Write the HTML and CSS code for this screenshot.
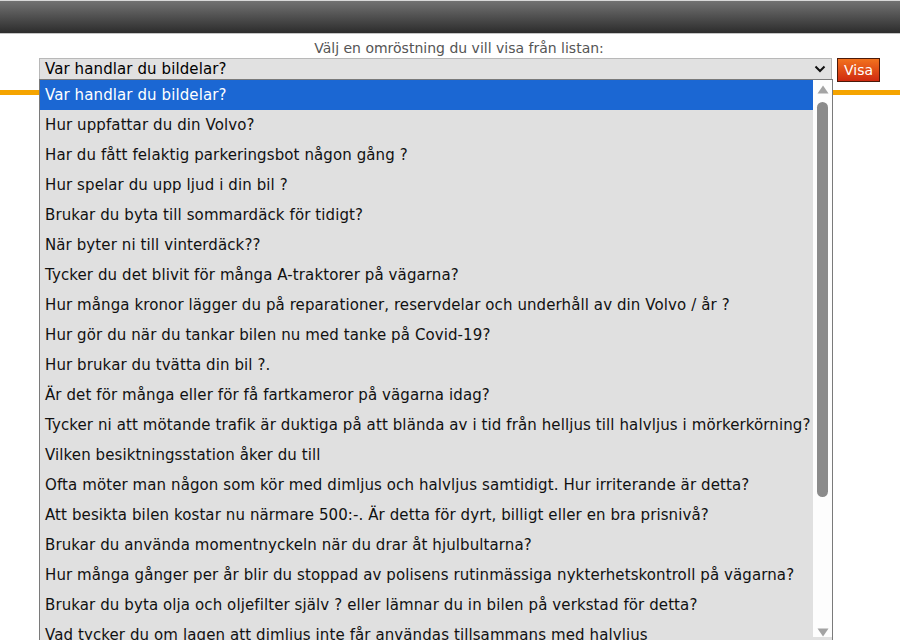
FILE: index.html
```html
<!DOCTYPE html>
<html lang="sv">
<head>
<meta charset="utf-8">
<title>Omröstning</title>
<link rel="stylesheet" href="styles.css">
</head>
<body>
<div class="topbar"></div>
<div class="content">
  <div class="label">Välj en omröstning du vill visa från listan:</div>
  <div class="row">
    <div class="select">
      <span>Var handlar du bildelar?</span>
      <svg class="chev" width="12" height="8" viewBox="0 0 12 8"><path d="M1.5 1.5 L6 6 L10.5 1.5" fill="none" stroke="#111" stroke-width="2"/></svg>
    </div>
    <button class="visa">Visa</button>
  </div>
  <div class="orange"></div>
</div>
<div class="dropdown">
  <ul class="options">
    <li class="sel">Var handlar du bildelar?</li>
    <li>Hur uppfattar du din Volvo?</li>
    <li>Har du fått felaktig parkeringsbot någon gång ?</li>
    <li>Hur spelar du upp ljud i din bil ?</li>
    <li>Brukar du byta till sommardäck för tidigt?</li>
    <li>När byter ni till vinterdäck??</li>
    <li>Tycker du det blivit för många A-traktorer på vägarna?</li>
    <li>Hur många kronor lägger du på reparationer, reservdelar och underhåll av din Volvo / år ?</li>
    <li>Hur gör du när du tankar bilen nu med tanke på Covid-19?</li>
    <li>Hur brukar du tvätta din bil ?.</li>
    <li>Är det för många eller för få fartkameror på vägarna idag?</li>
    <li>Tycker ni att mötande trafik är duktiga på att blända av i tid från helljus till halvljus i mörkerkörning?</li>
    <li>Vilken besiktningsstation åker du till</li>
    <li>Ofta möter man någon som kör med dimljus och halvljus samtidigt. Hur irriterande är detta?</li>
    <li>Att besikta bilen kostar nu närmare 500:-. Är detta för dyrt, billigt eller en bra prisnivå?</li>
    <li>Brukar du använda momentnyckeln när du drar åt hjulbultarna?</li>
    <li>Hur många gånger per år blir du stoppad av polisens rutinmässiga nykterhetskontroll på vägarna?</li>
    <li>Brukar du byta olja och oljefilter själv ? eller lämnar du in bilen på verkstad för detta?</li>
    <li>Vad tycker du om lagen att dimljus inte får användas tillsammans med halvljus</li>
  </ul>
  <div class="scrollbar">
    <svg class="arrow" width="12" height="9" viewBox="0 0 12 9"><path d="M6 0.5 L11.5 8.5 L0.5 8.5 Z" fill="#a3a3a3"/></svg>
    <div class="thumb"></div>
    <svg class="arrow down" width="12" height="9" viewBox="0 0 12 9"><path d="M0.5 0.5 L11.5 0.5 L6 8.5 Z" fill="#a3a3a3"/></svg>
  </div>
</div>
</body>
</html>
```

FILE: styles.css
```css
html, body {
  margin: 0;
  padding: 0;
  background: #fff;
  height: 640px;
  overflow: hidden;
}
body {
  font-family: "DejaVu Sans", Verdana, sans-serif;
  position: relative;
}
.topbar {
  height: 32px;
  border-top: 1px solid #d8d8d8;
  border-bottom: 1px solid #c4c4c4;
  background: linear-gradient(#727272, #2c2c2c);
}
.content {
  padding-top: 6px;
}
.label {
  text-align: center;
  font-size: 14px;
  color: #555;
  line-height: 17px;
  padding-left: 18px;
}
.row {
  display: flex;
  align-items: flex-start;
  gap: 5px;
  margin-left: 39px;
  margin-top: 1px;
}
.select {
  box-sizing: border-box;
  width: 793px;
  height: 22px;
  border: 1px solid #b8b8b8;
  background: #e1e1e1;
  display: flex;
  align-items: center;
  justify-content: space-between;
  padding: 0 5px 0 5px;
  font-size: 15px;
  letter-spacing: 0.1px;
  color: #000;
}
.visa {
  box-sizing: border-box;
  width: 43px;
  height: 24px;
  border: 1px solid #4a1a0a;
  background: linear-gradient(#f2721e, #cf2a10);
  color: #fff;
  font-family: "DejaVu Sans", Verdana, sans-serif;
  font-size: 14px;
  padding: 0;
}
.orange {
  margin-top: 8px;
  height: 5px;
  background: #f5a400;
}
.dropdown {
  position: absolute;
  left: 39px;
  top: 79px;
  width: 794px;
  height: 600px;
  box-sizing: border-box;
  border-left: 1px solid #7a7a7a;
  border-right: 1px solid #7a7a7a;
  border-top: 1px solid #7a7a7a;
  background: #e0e0e0;
  display: flex;
}
.options {
  list-style: none;
  margin: 0;
  padding: 0;
  flex: 1;
  min-width: 0;
}
.options li {
  height: 30px;
  line-height: 30px;
  padding-left: 5px;
  font-size: 15px;
  letter-spacing: 0.1px;
  color: #111;
  white-space: nowrap;
  overflow: hidden;
}
.options li.sel {
  background: #1b67d3;
  color: #fff;
}
.scrollbar {
  width: 19px;
  background: #fdfdfd;
  display: flex;
  flex-direction: column;
  align-items: center;
  padding-top: 5px;
  height: 552px;
}
.arrow {
  flex: none;
}
.thumb {
  width: 11px;
  height: 395px;
  margin-top: 8px;
  border-radius: 6px;
  background: #8b8b8b;
}
.arrow.down {
  margin-top: auto;
}
```
